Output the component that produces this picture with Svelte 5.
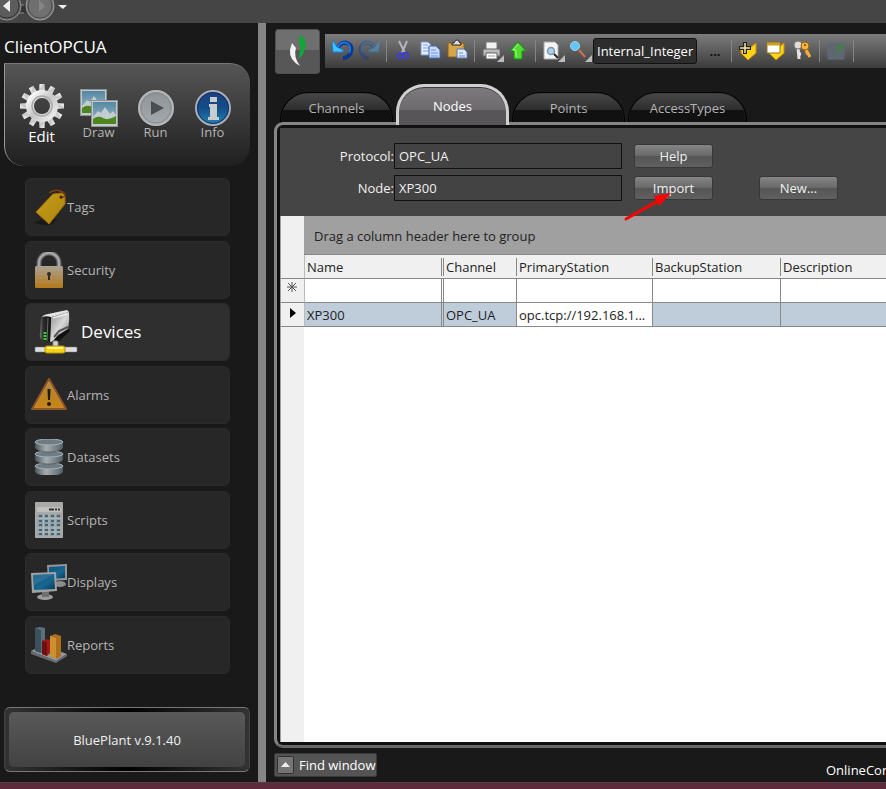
<script>
	let activeTab = $state('Nodes')
	let activeMode = $state('Edit')
	let activeSection = $state('Devices')
	let currentTag = $state('Internal_Integer')
	let protocol = $state('OPC_UA')
	let node = $state('XP300')

	const modes = ['Edit', 'Draw', 'Run', 'Info']
	const sections = ['Tags', 'Security', 'Devices', 'Alarms', 'Datasets', 'Scripts', 'Displays', 'Reports']
	const tabs = ['Channels', 'Nodes', 'Points', 'AccessTypes']
	const tools = [
		['undo', 'redo'],
		['cut', 'copy', 'paste'],
		['print', 'upload'],
		['preview', 'find']
	]
	const tagTools = ['addTag', 'tagList', 'keys']
	const teeth = Array(12).fill(null).map((_, i) => i * 30)
	const columns = ['Name', 'Channel', 'PrimaryStation', 'BackupStation', 'Description']
	const rows = [['XP300', 'OPC_UA', 'opc.tcp://192.168.1...', '', '']]
</script>

{#snippet modeIcon(name)}
	{#if name == 'Edit'}
		<svg width="46" height="46" viewBox="0 0 46 46">
			{#each teeth as angle}
				<path d="M20 10 L20.500 1 H25.500 L26 10Z" fill="url(#silver)" transform="rotate({angle} 23 23)" />
			{/each}
			<circle cx="23" cy="23" r="12" fill="none" stroke="url(#silver)" stroke-width="8" />
			<circle cx="23" cy="23" r="10" fill="none" stroke="#aaa" stroke-width="1.500" />
		</svg>
	{:else if name == 'Draw'}
		<svg width="38" height="38" viewBox="0 0 38 38">
			{#each [[0, 0], [11, 11]] as [x, y]}
				<g transform="translate({x} {y})">
					<rect x="0.500" y="0.500" width="26" height="26" fill="#c4c9c9" stroke="#8e9494" />
					<rect x="2" y="2" width="23" height="22" fill="url(#sky)" />
					<path d="M2 17 L7 11 L10 13 L14 7 L19 14 L22 11 L25 15 V19 H2Z" fill="#c2cdd0" />
					<path d="M2 19 Q7 15 12 18 T25 16 V24 H2Z" fill="#4d861e" />
				</g>
			{/each}
		</svg>
	{:else if name == 'Run'}
		<svg width="38" height="38" viewBox="0 0 38 38">
			<circle cx="19" cy="19" r="17" fill="url(#disc)" stroke="#b5b8ba" stroke-width="2" />
			<circle cx="19" cy="19" r="15" fill="none" stroke="#858a8e" />
			<path d="M14 12 L27 19 L14 26Z" fill="#4a4e52" />
		</svg>
	{:else}
		<svg width="38" height="38" viewBox="0 0 38 38">
			<circle cx="19" cy="19" r="17" fill="url(#blue)" stroke="#a9adb8" stroke-width="2" />
			<circle cx="19" cy="19" r="15.500" fill="none" stroke="#123067" />
			<path d="M16 8h7v5h-7zM15 15h8v13h2v3H14v-3h2V18h-1z" fill="#c8cccd" />
		</svg>
	{/if}
{/snippet}

{#snippet sectionIcon(name)}
	{#if name == 'Tags'}
		<svg width="36" height="36" viewBox="0 0 36 36">
			<path d="M3 33 Q15 28 27 30 L20 36 Q10 37 3 33Z" fill="#191919" />
			<path d="M5 23 L22 5 L31 4 L34 7 V15 L18 35Z" fill="url(#gold)" stroke="#a96a08" />
			<path d="M18 4 Q24 -1 32 3 Q37 8 29 9" fill="none" stroke="#7a4014" stroke-width="1.500" />
			<circle cx="30" cy="8" r="1.500" fill="#3a2404" />
		</svg>
	{:else if name == 'Security'}
		<svg width="36" height="36" viewBox="0 0 36 36">
			<path d="M8 17 V11 A10 10 0 0 1 28 11 V17" fill="none" stroke="#5f6060" stroke-width="5" />
			<path d="M8 17 V11 A10 10 0 0 1 28 11 V17" fill="none" stroke="#a6a6a6" stroke-width="2.500" />
			<rect x="4" y="14" width="28" height="22" rx="1.500" fill="url(#brass)" />
			<path d="M4 18H32M4 22H32M4 26H32M4 30H32" stroke="#c6a469" stroke-opacity="0.300" />
			<circle cx="18" cy="22" r="2" fill="#2e2b28" />
			<path d="M17 22h2v6h-2z" fill="#2e2b28" />
		</svg>
	{:else if name == 'Devices'}
		<svg width="44" height="44" viewBox="0 0 44 44">
			<path d="M19 29 L34 19 L36 21 L24 32Z" fill="#101010" />
			<path d="M8 7 Q9 5 14 4 L33 0 L35 2 L18 7Z" fill="#e2e2e2" />
			<path d="M17 7 L35 2 Q36 10 34 19 L24 25 L19 31 L16 32Z" fill="url(#metal)" />
			<path d="M19 8 L33 4" stroke="#fff" />
			<path d="M20 27 L25 21 L34 17" fill="none" stroke="#555" stroke-width="2" />
			<path d="M7 9 Q8 5 17 7 L16 32 L9 31 Q5 29 6 23Z" fill="url(#darkSide)" />
			<path d="M14 8 L13 31" stroke="#6a6a6a" />
			<path d="M11 22v9" stroke="#2bd22c" stroke-width="3" stroke-dasharray="2 1" />
			<rect x="19" y="31" width="5" height="6" rx="1" fill="#d2d2d2" stroke="#888" />
			<rect x="1" y="37" width="42" height="5" rx="1" fill="#dedede" stroke="#777" stroke-width="0.500" />
			<rect x="11" y="36" width="20" height="7" rx="2" fill="#f6d40d" stroke="#b9970a" />
			<path d="M13 38H29" stroke="#fff19a" stroke-width="2" />
		</svg>
	{:else if name == 'Alarms'}
		<svg width="36" height="36" viewBox="0 0 36 36">
			<path d="M18 2 L35 32 H1Z" fill="url(#amber)" stroke="#8f5428" stroke-width="2" stroke-linejoin="round" />
			<path d="M18 5 L32 30 H4Z" fill="none" stroke="#c98a35" />
			<path d="M16.500 12 H19.500 L19 23 H17Z" fill="#211a10" />
			<circle cx="18" cy="27" r="2" fill="#211a10" />
		</svg>
	{:else if name == 'Datasets'}
		<svg width="36" height="36" viewBox="0 0 36 36">
			{#each [25, 13, 1] as y}
				<path d="M4 {y + 2} V{y + 8} Q7 {y + 12} 18 {y + 12} T32 {y + 8} V{y + 2}Z" fill="url(#steel)" stroke="#343b40" stroke-width="0.500" />
				<ellipse cx="18" cy={y + 2} rx="14" ry="3" fill="#707c83" stroke="#a7b0b5" />
			{/each}
		</svg>
	{:else if name == 'Scripts'}
		<svg width="36" height="36" viewBox="0 0 36 36">
			<rect x="4" y="0" width="28" height="36" rx="1" fill="#a9a9a8" />
			<rect x="6" y="5" width="24" height="5" fill="#bfc0be" />
			<path d="M18 7.500h5m1 0h2m1 0h2" stroke="#353535" stroke-width="2" />
			<rect x="6" y="12" width="24" height="22" fill="#8fa0a8" />
			<path d="M8 14H29M8 19H29M8 23H29M8 28H29M8 32H29" stroke="#4b6370" stroke-width="2" stroke-dasharray="3 3" />
			<path d="M6 16.500H30M6 26H30M6 30H30M12.500 12V34M18 12V34M24 12V34" stroke="#b0babe" />
		</svg>
	{:else if name == 'Displays'}
		<svg width="36" height="36" viewBox="0 0 36 36">
			<ellipse cx="29" cy="20" rx="6" ry="3" fill="#8c8c8c" />
			<path d="M16 1 L36 0 V16 L17 17Z" fill="#929698" />
			<path d="M18 3 L34 2 V14 L18 15Z" fill="url(#screen)" />
			<ellipse cx="14" cy="33" rx="8" ry="3" fill="#9d9d9d" />
			<path d="M11 27h7v6h-7z" fill="#707070" />
			<path d="M0 9 L25 8 L26 27 L1 29Z" fill="#a0a3a5" />
			<path d="M2 11 L23 10 L24 25 L3 26Z" fill="url(#screen)" />
			<path d="M2 11 L23 10 L3 21Z" fill="#5794b4" fill-opacity="0.350" />
		</svg>
	{:else}
		<svg width="36" height="36" viewBox="0 0 36 36">
			<path d="M0 24 L12 18 L36 27 L25 34Z" fill="#92979d" />
			<path d="M0 24 L25 34 L36 27 V29 L25 36 L0 27Z" fill="#666d73" />
			<path d="M4 1 L9 0 L14 1 V23 L10 26 L4 24Z" fill="#59717d" />
			<path d="M4 1 L10 3 V26 L4 24Z" fill="#3c515d" />
			<path d="M11 14 L15 12 L19 13 V26 L16 29 L11 27Z" fill="#a11a17" />
			<path d="M11 14 L16 15 V29 L11 27Z" fill="#6e1010" />
			<path d="M19 9 L24 7 L30 9 V29 L25 32 L19 29Z" fill="#b06d1c" />
			<path d="M19 9 L25 11 V32 L19 29Z" fill="#cb9030" />
		</svg>
	{/if}
{/snippet}

{#snippet toolIcon(name)}
	<svg width="27" height="26" viewBox="0 0 27 26">
		{#if name == 'undo' || name == 'redo'}
			<g transform={name == 'redo' ? 'translate(27 0) scale(-1 1)' : undefined} opacity={name == 'redo' ? 0.35 : 1}>
				<path d="M8 11 Q12 3 18 5 Q25 8 21 16 Q19 20 14 20" fill="none" stroke="#0a3790" stroke-width="4" />
				<path d="M8 10 Q12 3 18 5 Q23 8 20 15" fill="none" stroke="#1b74e0" stroke-width="2" />
				<path d="M3 4 L5 4 L8 9 L14 12 V14 H4Z" fill="#45c0ff" stroke="#1581e0" />
			</g>
		{:else if name == 'cut'}
			<path d="M9 3 L15 15 M17 3 L12 15" stroke="#b4b4bc" stroke-width="2" />
			<path d="M12 14 H14 V17 H12Z" fill="#4141c8" />
			<circle cx="10" cy="18" r="2.500" fill="none" stroke="#4141c8" stroke-width="2" />
			<circle cx="16" cy="17" r="2.500" fill="none" stroke="#4141c8" stroke-width="2" />
		{:else if name == 'copy'}
			<path d="M4 4h7l3 3v10H4z" fill="#e4efff" stroke="#7b95cf" />
			<path d="M6 7h5M6 10h6M6 13h6" stroke="#7da0df" />
			<path d="M12 8h7l4 4v8H12z" fill="#c7dcff" stroke="#4267b4" />
			<path d="M14 12h5M14 15h7M14 18h7" stroke="#6c93df" />
		{:else if name == 'paste'}
			<rect x="4" y="5" width="16" height="14" rx="1" fill="#d6a548" stroke="#8f5e16" />
			<path d="M8 7 V5 H10 Q11 1 14 2 L16 5 H17 V7Z" fill="#ddd" stroke="#222" />
			<path d="M13 11h7l3 3v6H13z" fill="#dce9ff" stroke="#5778bb" />
			<path d="M15 15h4M15 18h6" stroke="#6389d0" />
		{:else if name == 'print'}
			<path d="M8 4h11v8H8z" fill="#f2f2f2" stroke="#777" />
			<path d="M5 11h17v7H5z" fill="#bcbcbc" stroke="#646464" />
			<path d="M8 15h11v6H8z" fill="#fff" stroke="#5e5e5e" />
			<path d="M10 18h7" stroke="#999" />
		{:else if name == 'upload'}
			<path d="M13 4 L21 13 H17 V21 H9 V13 H5Z" fill="#52db31" stroke="#159016" stroke-linejoin="round" />
			<path d="M13 6 L8 12 H11 V19" fill="none" stroke="#a2f782" />
		{:else if name == 'preview'}
			<path d="M5 4h11l3 3v14H5z" fill="#f5f5f5" stroke="#aaa" />
			<circle cx="12" cy="13" r="3.500" fill="#a8d4ea" stroke="#7f97ad" stroke-width="1.500" />
			<path d="M15 16 L19 20" stroke="#222" stroke-width="2" />
		{:else if name == 'find'}
			<circle cx="9" cy="8" r="4.500" fill="#62c7f4" stroke="#a0d4ef" />
			<path d="M13 12 L19 19" stroke="#d46e50" stroke-width="2" />
		{:else if name == 'addTag'}
			<path d="M6 9h10l5-4v10l-8 7-7-7z" fill="#ffd413" stroke="#d38d00" />
			<path d="M10 4v12M4 10h12" stroke="#202020" stroke-width="4" />
			<path d="M10 5v10M5 10h10" stroke="#f7e9a0" stroke-width="1.500" />
		{:else if name == 'tagList'}
			<path d="M7 9h10l5-4v10l-8 7-7-7z" fill="#ffd413" stroke="#d38d00" />
			<path d="M5 5h13v10H5z" fill="#fff" stroke="#9a7521" />
			<path d="M5 6h13" stroke="#d49c19" stroke-width="3" />
		{:else if name == 'keys'}
			<path d="M9 9 L10 21 M12 16 H9" stroke="#e6e6e6" stroke-width="3" />
			<circle cx="9" cy="7" r="4" fill="#ddd" stroke="#777" />
			<path d="M16 10 L21 19 M17 16 L20 14" stroke="#f5ae36" stroke-width="3" />
			<circle cx="16" cy="8" r="4" fill="#f7b43c" stroke="#955f16" />
			<circle cx="16" cy="7" r="1" fill="#714815" />
		{:else}
			<path d="M5 5h16v16H5z" fill="#5f676e" stroke="#5d6b83" />
			<path d="M12 15 L15 11 L13 8 L21 5 V13 L18 11 L14 17Z" fill="#4c794f" />
		{/if}
		{#if ['print', 'preview', 'find'].includes(name)}
			<path d="M26 17 V24 H19Z" fill="#bcbcbc" />
		{/if}
	</svg>
{/snippet}

<svg class="defs" width="0" height="0" aria-hidden="true">
	<defs>
		<linearGradient id="silver" x2="1" y2="1"><stop stop-color="#fff" /><stop offset="0.500" stop-color="#c6c6c6" /><stop offset="1" stop-color="#eee" /></linearGradient>
		<linearGradient id="metal" x2="1" y2="1"><stop stop-color="#8c8c8c" /><stop offset="0.500" stop-color="#d8d8d8" /><stop offset="1" stop-color="#777" /></linearGradient>
		<linearGradient id="sky" x2="0" y2="1"><stop stop-color="#5288a5" /><stop offset="1" stop-color="#a8bbc4" /></linearGradient>
		<linearGradient id="disc" x2="0" y2="1"><stop stop-color="#8d9397" /><stop offset="1" stop-color="#a5aaae" /></linearGradient>
		<linearGradient id="blue" x2="0" y2="1"><stop stop-color="#1a3f7c" /><stop offset="0.500" stop-color="#134d88" /><stop offset="1" stop-color="#2485b5" /></linearGradient>
		<linearGradient id="gold" x2="1" y2="1"><stop stop-color="#c89d19" /><stop offset="1" stop-color="#aa870e" /></linearGradient>
		<linearGradient id="brass" x2="0" y2="1"><stop stop-color="#a9a396" /><stop offset="0.500" stop-color="#ad8955" /><stop offset="1" stop-color="#b57b17" /></linearGradient>
		<linearGradient id="amber" x2="0" y2="1"><stop stop-color="#a38958" /><stop offset="0.500" stop-color="#b98424" /><stop offset="1" stop-color="#c78513" /></linearGradient>
		<linearGradient id="steel"><stop stop-color="#4d5a61" /><stop offset="0.400" stop-color="#a5adb0" /><stop offset="1" stop-color="#53616a" /></linearGradient>
		<linearGradient id="screen" x2="1" y2="1"><stop stop-color="#10517a" /><stop offset="0.600" stop-color="#176793" /><stop offset="1" stop-color="#093652" /></linearGradient>
		<linearGradient id="darkSide"><stop stop-color="#777" /><stop offset="0.300" stop-color="#2c2c2c" /><stop offset="1" stop-color="#111" /></linearGradient>
	</defs>
</svg>

<div class="app">
	<header>
		<button class="history" aria-label="Back">
			<svg width="24" height="23" viewBox="0 0 24 23">
				<path d="M16 5h10v8H18Z" fill="#333" stroke="#888" />
				<circle cx="7" cy="6" r="14" fill="#5c5c5c" stroke="#929292" />
				<circle cx="7" cy="6" r="12" fill="none" stroke="#333" />
				<path d="M3 6 L10 0 V12Z" fill="#eee" />
			</svg>
		</button>
		<button class="history" aria-label="Forward">
			<svg width="32" height="23" viewBox="0 0 32 23">
				<path d="M0 5h8v8H0Z" fill="#333" />
				<circle cx="16" cy="6" r="14" fill="#707070" stroke="#a0a0a0" />
				<circle cx="16" cy="6" r="12" fill="none" stroke="#4c4c4c" />
				<path d="M21 6 L15 0 V12Z" fill="#858585" />
			</svg>
		</button>
		<button class="history" aria-label="Recent pages">
			<svg width="14" height="23" viewBox="0 0 14 23"><path d="M2 5h9L7 9Z" fill="#eee" /></svg>
		</button>
	</header>

	<div class="body">
		<aside>
			<h1>ClientOPCUA</h1>
			<div class="modes">
				{#each modes as mode}
					<button class="mode" class:active={mode == activeMode} onclick={() => activeMode = mode}>
						{@render modeIcon(mode)}
						<span>{mode}</span>
					</button>
				{/each}
			</div>
			<nav>
				{#each sections as section}
					<button class="section" class:active={section == activeSection} onclick={() => activeSection = section}>
						{@render sectionIcon(section)}
						<span>{section}</span>
					</button>
				{/each}
			</nav>
			<button class="version"><span>BluePlant v.9.1.40</span></button>
		</aside>

		<div class="splitter"></div>

		<main>
			<div class="top">
				<button class="logo" aria-label="Home">
					<svg width="43" height="43" viewBox="0 0 43 43">
						<path d="M25 5 Q33 12 28 22 Q26 27 22 29 Q26 19 23 12 Q22 9 25 5Z" fill="#13a538" />
						<path d="M16 13 L20 18 Q17 26 24 36 Q13 30 14 20Z" fill="#f2f2f2" />
					</svg>
				</button>
				<div class="toolbar">
					{#each tools as group, i}
						{#if i > 0}<i class="separator"></i>{/if}
						{#each group as tool}
							<button class="tool" aria-label={tool}>{@render toolIcon(tool)}</button>
						{/each}
					{/each}
					<input class="tag-name" aria-label="Current tag" bind:value={currentTag} />
					<button class="more">...</button>
					<i class="separator"></i>
					{#each tagTools as tool}
						<button class="tool" aria-label={tool}>{@render toolIcon(tool)}</button>
					{/each}
					<i class="separator"></i>
					<button class="tool" aria-label="export">{@render toolIcon('export')}</button>
					<i class="separator"></i>
				</div>
			</div>

			<div class="tabs" role="tablist">
				{#each tabs as tab}
					<button class="tab" role="tab" aria-selected={tab == activeTab} class:active={tab == activeTab} onclick={() => activeTab = tab}>{tab}</button>
				{/each}
			</div>

			<section class="panel">
				<form onsubmit={(e) => e.preventDefault()}>
					<label for="protocol">Protocol:</label>
					<input id="protocol" bind:value={protocol} />
					<button class="action help">Help</button>
					<label for="node">Node:</label>
					<input id="node" bind:value={node} />
					<div class="import">
						<button class="action">Import</button>
						<svg class="pointer" width="50" height="32" viewBox="0 0 50 32">
							<path d="M3 29 L35 11" stroke="#f00" stroke-width="3" stroke-linecap="round" />
							<path d="M48 3 L36 16 L31 6Z" fill="#f00" />
						</svg>
					</div>
					<button class="action">New...</button>
				</form>

				<div class="grid">
					<div class="group-bar">Drag a column header here to group</div>
					<table>
						<colgroup>
							<col class="c-mark" /><col class="c-name" /><col class="c-channel" /><col class="c-primary" /><col class="c-backup" /><col />
						</colgroup>
						<thead>
							<tr>
								<td class="mark"></td>
								{#each columns as column, i}
									<th class:frozen={i == 0}><span>{column}</span></th>
								{/each}
							</tr>
						</thead>
						<tbody>
							<tr>
								<td class="mark new-row">
									<svg width="12" height="12" viewBox="0 0 12 12"><path d="M6 1V11M1 6H11M2 2L10 10M10 2L2 10" stroke="#555" /></svg>
								</td>
								{#each columns as column, i}
									<td class:frozen={i == 0}></td>
								{/each}
							</tr>
							{#each rows as row}
								<tr class="selected">
									<td class="mark">
										<svg width="12" height="16" viewBox="0 0 12 16"><path d="M4 1 L10 6 L4 11Z" fill="#000" /></svg>
									</td>
									{#each row as value, i}
										<td class:frozen={i == 0} class:current={i == 2}>{value}</td>
									{/each}
								</tr>
							{/each}
						</tbody>
					</table>
				</div>
			</section>

			<footer>
				<button class="find">
					<svg width="17" height="18" viewBox="0 0 17 18">
						<rect x="0.500" y="0.500" width="16" height="17" rx="1" fill="#747474" stroke="#303030" />
						<path d="M4 11 L8.500 6 L13 11Z" fill="#eee" />
					</svg>
					<span>Find window</span>
				</button>
				<span class="status">OnlineCon</span>
			</footer>
		</main>
	</div>
	<div class="taskbar"></div>
</div>

<style>
	:global(body) {
		margin: 0;
	}

	.defs {
		position: absolute;
	}

	.app {
		display: flex;
		flex-direction: column;
		height: 100vh;
		min-height: 700px;
		overflow: hidden;
		background: #191919;
		color: #f0f0f0;
		font: 13px/18px "Open Sans", "Noto Sans", sans-serif;
	}

	.app * {
		box-sizing: border-box;
	}

	button, input {
		margin: 0;
		padding: 0;
		border: 0;
		background: none;
		color: inherit;
		font: inherit;
	}

	svg {
		display: block;
		flex: none;
	}

	header {
		display: flex;
		flex: none;
		height: 23px;
		overflow: hidden;
		background: #454545;
	}

	.body {
		display: flex;
		flex: 1;
		min-height: 0;
	}

	.taskbar {
		flex: none;
		height: 7px;
		background: #5e2a3c;
		border-top: 1px solid #553c45;
	}

	aside {
		display: flex;
		flex-direction: column;
		flex: none;
		width: 258px;
		padding: 12px 8px 10px 4px;
	}

	h1 {
		margin: 0 0 4px;
		font-size: 17px;
		line-height: 24px;
		font-weight: 400;
		color: #fff;
	}

	.modes {
		display: flex;
		flex: none;
		height: 103px;
		padding: 18px 9px 0 8px;
		border-left: 1px solid #999;
		border-top: 1px solid #777;
		border-radius: 0 20px 20px 20px;
		background: linear-gradient(#555, #3a3a3a 50%, #202020);
	}

	.mode {
		display: flex;
		flex-direction: column;
		align-items: center;
		flex: 1;
		padding-top: 7px;
		height: 64px;
		color: #b4b4b4;
	}

	.mode span {
		margin-top: -4px;
	}

	.mode.active {
		padding-top: 1px;
		color: #fff;
		font-size: 15px;
	}

	.mode.active span {
		margin-top: -2px;
	}

	nav {
		display: flex;
		flex-direction: column;
		justify-content: space-between;
		flex: 1;
		margin: 12px 20px 33px 21px;
	}

	.section {
		display: flex;
		align-items: center;
		height: 58px;
		padding-left: 5px;
		border: 1px solid #2b2b2b;
		border-radius: 6px;
		background: #272727;
		color: #b4b4b4;
	}

	.section.active {
		gap: 3px;
		padding-left: 8px;
		background: #2f2f2f;
		color: #fff;
		font-size: 17px;
	}

	.version {
		display: flex;
		height: 65px;
		padding: 4px;
		border: 1px solid #777;
		border-left-color: #444;
		border-right-color: #444;
		border-radius: 6px;
		background: linear-gradient(to right, #333, #000 50%, #333);
	}

	.version span {
		display: flex;
		align-items: center;
		justify-content: center;
		flex: 1;
		align-self: stretch;
		border-radius: 5px;
		background: linear-gradient(#595959, #424242);
	}

	.splitter {
		flex: none;
		width: 8px;
		background: #858585;
	}

	main {
		display: flex;
		flex-direction: column;
		flex: 1;
		min-width: 0;
		padding: 6px 0 0 8px;
	}

	.top {
		display: flex;
		gap: 5px;
		padding-left: 1px;
	}

	.logo {
		flex: none;
		width: 45px;
		height: 45px;
		border: 1px solid #505050;
		border-radius: 3px;
		background: linear-gradient(#6f6f6f 46%, #575757 46%);
	}

	.toolbar {
		display: flex;
		align-items: center;
		flex: 1;
		min-width: 0;
		height: 34px;
		margin-top: 5px;
		padding-left: 4px;
		background: linear-gradient(#7c7c7c, #5c5c5c 50%, #3c3c3c);
	}

	.tool {
		flex: none;
		width: 27px;
	}

	.separator {
		flex: none;
		width: 1px;
		height: 22px;
		margin: 0 3px;
		background: #858585;
	}

	.tag-name {
		flex: none;
		width: 104px;
		height: 26px;
		padding: 0 1px 0 3px;
		border: 1px solid #111;
		border-radius: 3px;
		background: #2d2d2d;
		color: #fff;
	}

	.more {
		flex: none;
		width: 31px;
		padding-left: 5px;
		color: #111;
		font-weight: 700;
	}

	.tabs {
		display: flex;
		align-items: flex-end;
		gap: 3px;
		height: 38px;
		margin-top: 10px;
		padding-left: 6px;
	}

	.tab {
		width: 113px;
		height: 30px;
		border: 1px solid #000;
		border-bottom: 0;
		border-radius: 28px 28px 0 0;
		background: linear-gradient(#484848, #2c2c2c 60%, #111 60%);
		color: #b4b4b4;
		box-shadow: inset 0 1px #3c3c3c;
	}

	.tab:last-child {
		width: 119px;
	}

	.tab.active {
		position: relative;
		height: 41px;
		margin-bottom: -3px;
		border: 3px solid #d0d0d0;
		border-bottom: 0;
		border-radius: 28px 28px 0 0;
		background: linear-gradient(#7d7b7d, #6c6a6c 60%, #575557 60%);
		color: #fff;
	}

	.panel {
		display: flex;
		flex-direction: column;
		flex: 1;
		min-height: 0;
		padding: 3px 0 3px 3px;
		border: 3px solid #858585;
		border-right: 0;
		border-bottom-color: #686868;
		border-radius: 9px 0 0 9px;
		background: #101010;
	}

	form {
		display: grid;
		grid-template-columns: 114px 228px 125px 91px;
		grid-auto-rows: 26px;
		row-gap: 6px;
		flex: none;
		align-items: center;
		padding: 15px 0;
		background: #454545;
	}

	form label {
		text-align: right;
	}

	form input {
		width: 100%;
		height: 26px;
		padding: 0 4px;
		border: 1px solid #111;
		background: #434343;
	}

	.action {
		width: 79px;
		height: 24px;
		margin-left: 12px;
		border: 1px solid #383838;
		border-radius: 3px;
		background: linear-gradient(#858585, #686868 50%, #555 50%, #606060);
	}

	.help {
		grid-column: 3 / 5;
	}

	.import {
		position: relative;
	}

	.pointer {
		position: absolute;
		left: 1px;
		top: 14px;
		pointer-events: none;
	}

	.grid {
		flex: 1;
		min-height: 0;
		border-left: 1px solid #a0a0a0;
		background: linear-gradient(to right, #f0f0f0 23px, #fff 23px);
		color: #222;
	}

	.group-bar {
		height: 39px;
		margin-left: 23px;
		padding: 11px 10px 0;
		background: #a0a0a0;
		border-bottom: 1px solid #888;
	}

	table {
		width: 100%;
		table-layout: fixed;
		border-collapse: separate;
		border-spacing: 0;
	}

	.c-mark { width: 24px; }
	.c-name { width: 139px; }
	.c-channel { width: 73px; }
	.c-primary { width: 136px; }
	.c-backup { width: 128px; }

	th, td {
		height: 24px;
		padding: 0 2px;
		border-right: 1px solid #888;
		border-bottom: 1px solid #888;
		text-align: left;
		font-weight: 400;
		white-space: nowrap;
		overflow: hidden;
	}

	th {
		padding: 0;
		border-right: 0;
		background: #f0f0f0;
	}

	th span {
		display: block;
		padding: 0 2px;
		border-right: 1px solid #888;
	}

	th.frozen span, td.frozen {
		border-right: 3px double #888;
	}

	td:last-child, th:last-child span {
		border-right: 0;
	}

	.mark {
		padding: 0 0 0 5px;
		border-right-color: #bbb;
		background: #f0f0f0;
	}

	.new-row {
		padding-top: 2px;
		vertical-align: top;
	}

	.selected td:not(.mark, .current) {
		background: #bfcddb;
	}

	footer {
		display: flex;
		align-items: center;
		justify-content: space-between;
		flex: none;
		height: 34px;
	}

	.find {
		display: flex;
		align-items: center;
		gap: 5px;
		height: 24px;
		padding: 0 1px 0 2px;
		border: 1px solid #3a3a3a;
		border-radius: 2px;
		background: #545454;
		color: #fff;
	}

	.status {
		width: 60px;
		padding-top: 10px;
		overflow: hidden;
		white-space: nowrap;
		color: #fff;
	}
</style>
